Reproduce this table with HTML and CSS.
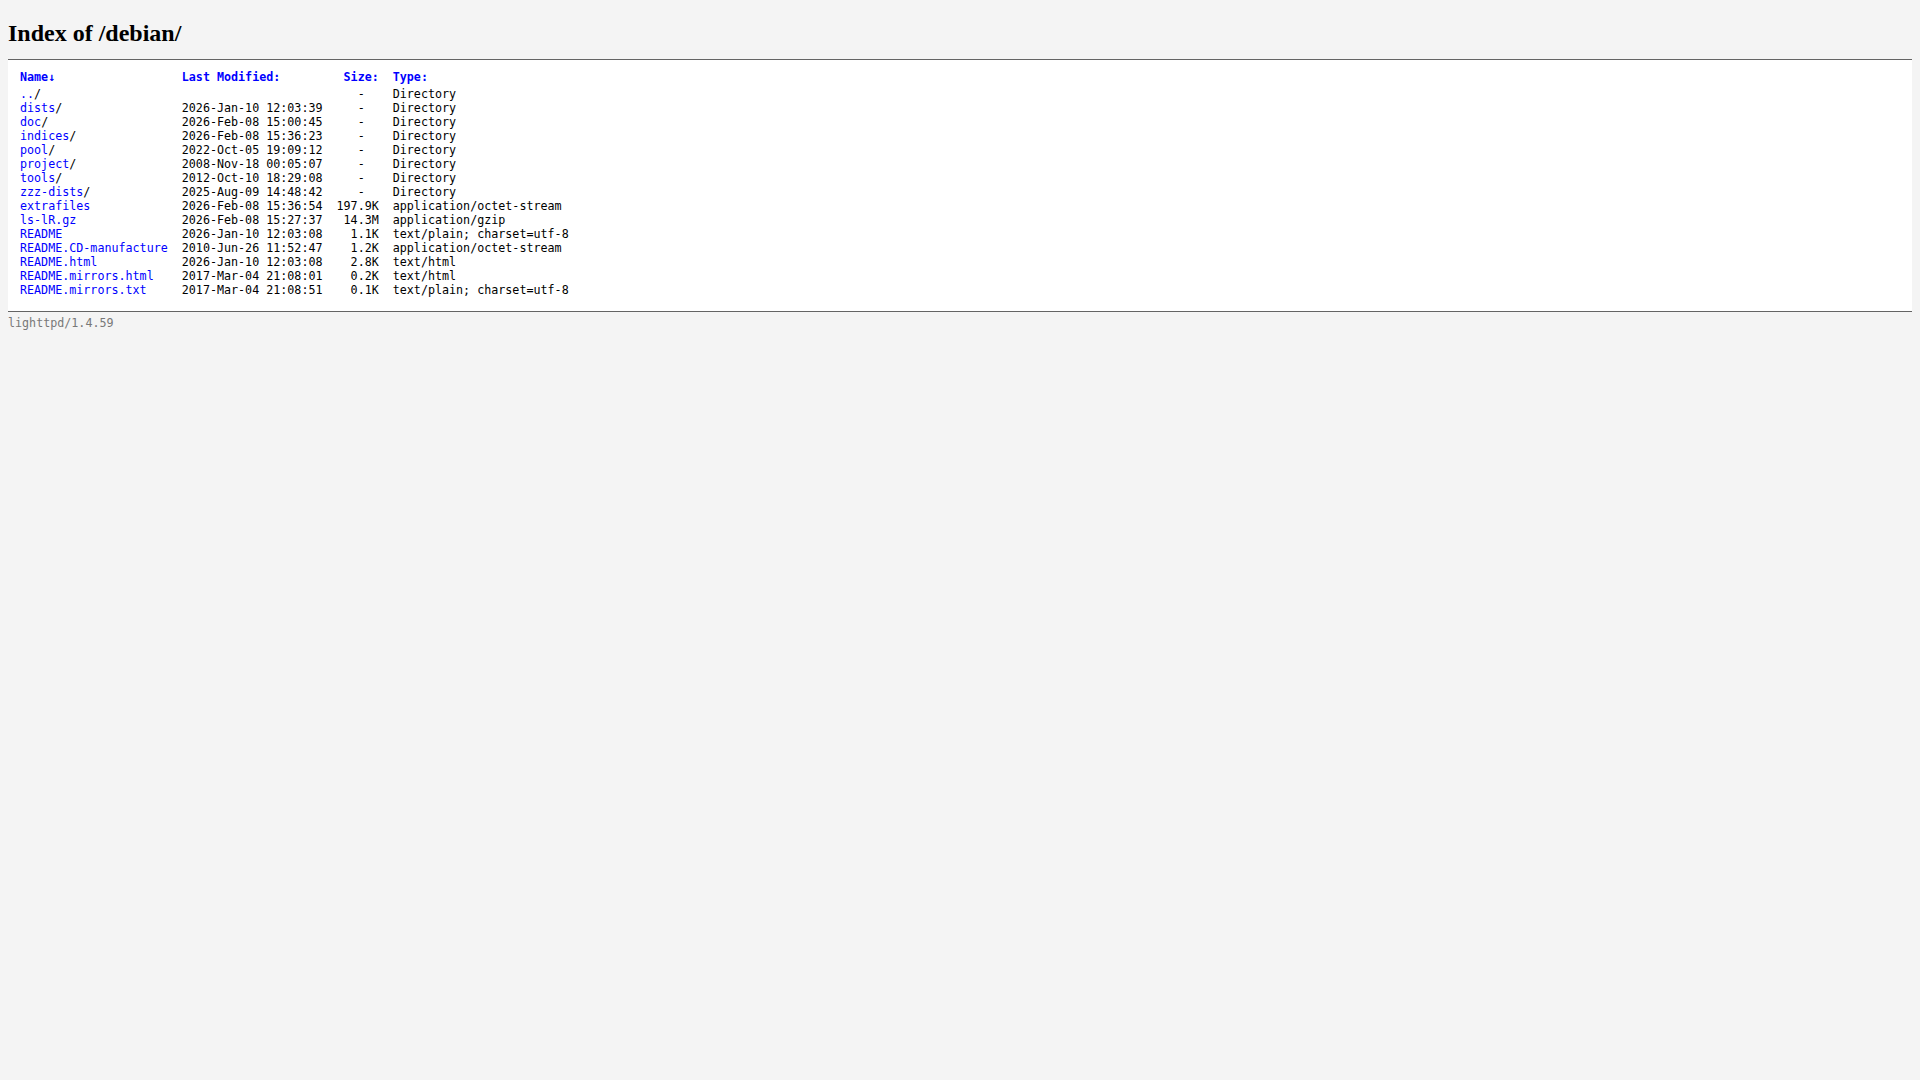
FILE: index.html
```html
<!DOCTYPE html>
<html>
<head>
<meta charset="utf-8">
<title>Index of /debian/</title>
<link rel="stylesheet" href="styles.css">
</head>
<body>
<h2 class="title">Index of /debian/</h2>
<div class="list">
<table class="listing" cellpadding="0" cellspacing="0">
<thead><tr><th class="n"><a href="#">Name&darr;</a></th><th class="m"><a href="#">Last Modified:</a></th><th class="s"><a href="#">Size:</a></th><th class="t"><a href="#">Type:</a></th></tr></thead>
<tbody>
<tr><td class="n"><a href="#">..</a>/</td><td class="m">&nbsp;</td><td class="s">- &nbsp;</td><td class="t">Directory</td></tr>
<tr><td class="n"><a href="#">dists</a>/</td><td class="m">2026-Jan-10 12:03:39</td><td class="s">- &nbsp;</td><td class="t">Directory</td></tr>
<tr><td class="n"><a href="#">doc</a>/</td><td class="m">2026-Feb-08 15:00:45</td><td class="s">- &nbsp;</td><td class="t">Directory</td></tr>
<tr><td class="n"><a href="#">indices</a>/</td><td class="m">2026-Feb-08 15:36:23</td><td class="s">- &nbsp;</td><td class="t">Directory</td></tr>
<tr><td class="n"><a href="#">pool</a>/</td><td class="m">2022-Oct-05 19:09:12</td><td class="s">- &nbsp;</td><td class="t">Directory</td></tr>
<tr><td class="n"><a href="#">project</a>/</td><td class="m">2008-Nov-18 00:05:07</td><td class="s">- &nbsp;</td><td class="t">Directory</td></tr>
<tr><td class="n"><a href="#">tools</a>/</td><td class="m">2012-Oct-10 18:29:08</td><td class="s">- &nbsp;</td><td class="t">Directory</td></tr>
<tr><td class="n"><a href="#">zzz-dists</a>/</td><td class="m">2025-Aug-09 14:48:42</td><td class="s">- &nbsp;</td><td class="t">Directory</td></tr>
<tr><td class="n"><a href="#">extrafiles</a></td><td class="m">2026-Feb-08 15:36:54</td><td class="s">197.9K</td><td class="t">application/octet-stream</td></tr>
<tr><td class="n"><a href="#">ls-lR.gz</a></td><td class="m">2026-Feb-08 15:27:37</td><td class="s">14.3M</td><td class="t">application/gzip</td></tr>
<tr><td class="n"><a href="#">README</a></td><td class="m">2026-Jan-10 12:03:08</td><td class="s">1.1K</td><td class="t">text/plain; charset=utf-8</td></tr>
<tr><td class="n"><a href="#">README.CD-manufacture</a></td><td class="m">2010-Jun-26 11:52:47</td><td class="s">1.2K</td><td class="t">application/octet-stream</td></tr>
<tr><td class="n"><a href="#">README.html</a></td><td class="m">2026-Jan-10 12:03:08</td><td class="s">2.8K</td><td class="t">text/html</td></tr>
<tr><td class="n"><a href="#">README.mirrors.html</a></td><td class="m">2017-Mar-04 21:08:01</td><td class="s">0.2K</td><td class="t">text/html</td></tr>
<tr><td class="n"><a href="#">README.mirrors.txt</a></td><td class="m">2017-Mar-04 21:08:51</td><td class="s">0.1K</td><td class="t">text/plain; charset=utf-8</td></tr>
</tbody>
</table>
</div>
<div class="foot">lighttpd/1.4.59</div>
</body>
</html>
```
FILE: styles.css
```css
body {
  margin: 8px;
  background-color: #f4f4f4;
  font-family: "Liberation Serif", serif;
}
a, a:active, a:visited { text-decoration: none; color: blue; }
.title { font-size: 24px; font-weight: bold; margin: 12px 0 12px 0; }
.listing { margin-left: 12px; border-collapse: separate; }
.listing th, .listing td {
  font-family: "DejaVu Sans Mono", monospace;
  font-size: 11.7px;
  text-align: left;
  white-space: nowrap;
}
.listing th { font-weight: bold; padding-right: 14px; padding-bottom: 3px; }
.listing td { padding-right: 14px; }
.listing td.s, .listing th.s { text-align: right; }
.list {
  background-color: white;
  border-top: 1px solid #646464;
  border-bottom: 1px solid #646464;
  padding-top: 10px;
  padding-bottom: 14px;
}
.foot {
  font-family: "DejaVu Sans Mono", monospace;
  font-size: 11.7px;
  color: #787878;
  padding-top: 4px;
}
```
